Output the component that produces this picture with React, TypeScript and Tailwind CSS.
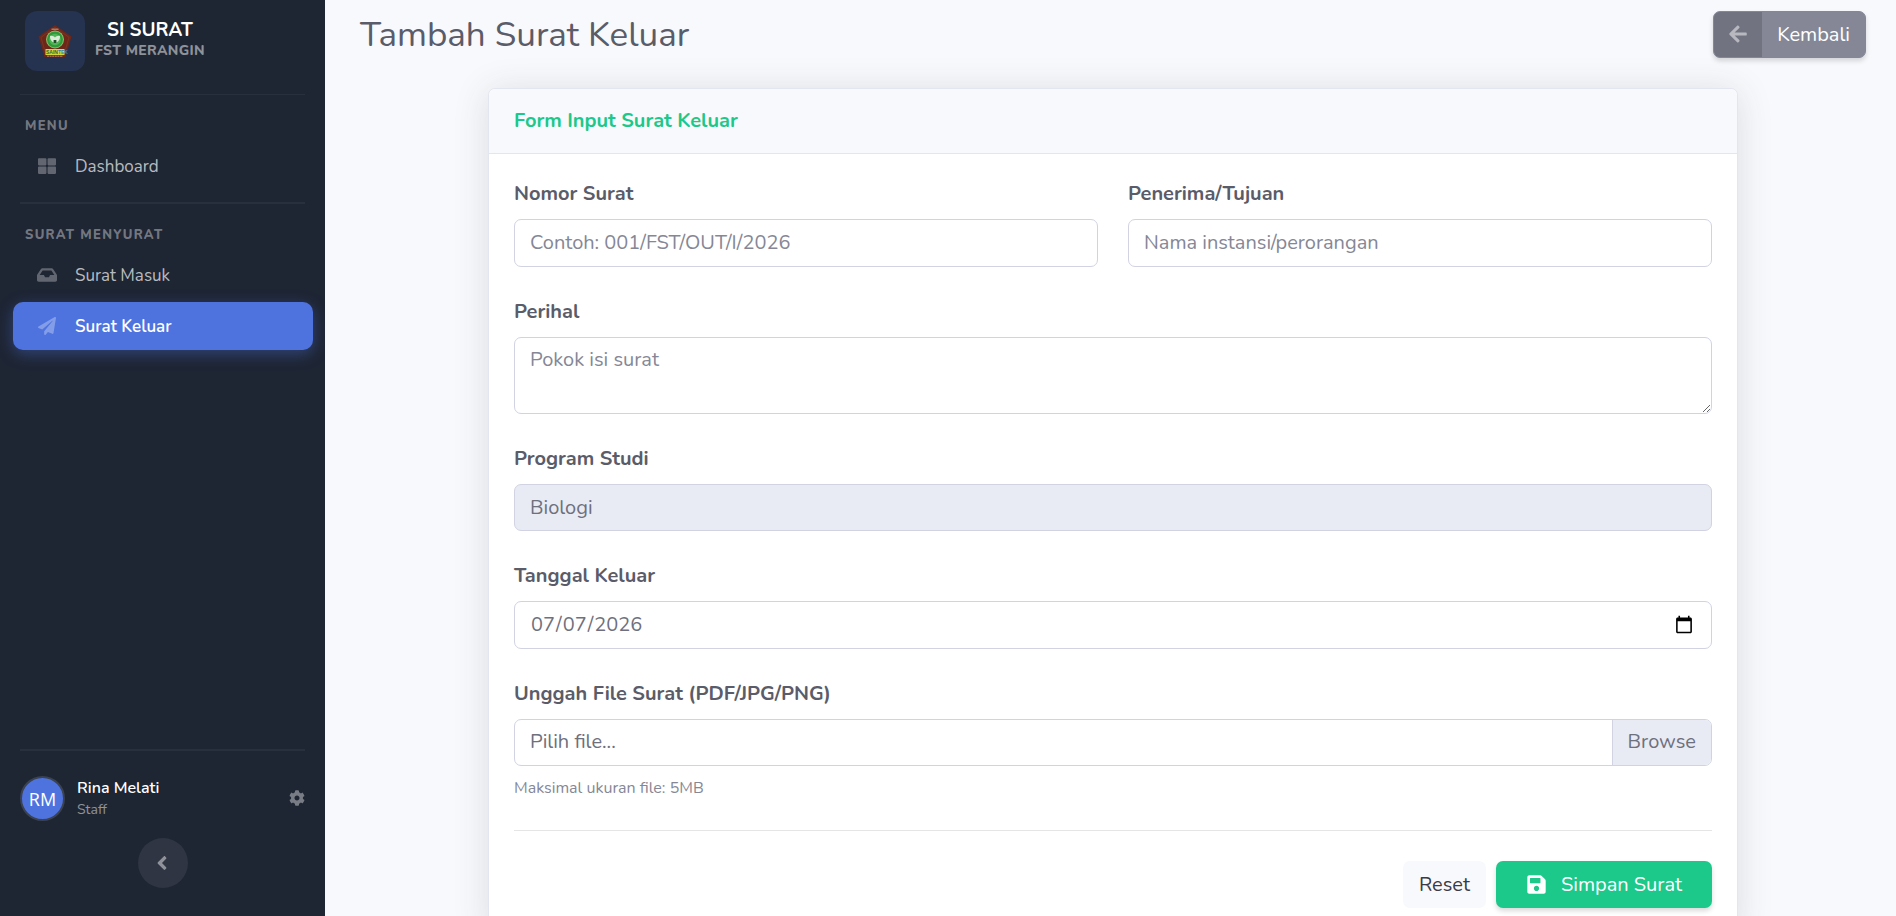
import type { ReactNode } from "react";
import {
  FaAngleLeft,
  FaArrowLeft,
  FaCog,
  FaInbox,
  FaPaperPlane,
  FaSave,
  FaThLarge,
} from "react-icons/fa";

const control =
  "block w-full rounded-[7px] border border-[#d1d3e2] px-[15px] text-xl leading-[30px] text-[#6e707e] placeholder:text-[#858796] outline-none";

function Emblem() {
  return (
    <svg viewBox="0 0 34 34" className="h-[34px] w-[34px]" aria-hidden="true">
      <path d="M17 1 33.500 12.500 27.500 33H6.500L.5 12.500Z" fill="#6e2618" />
      <path d="M17 3.500 31 13.300 26 31H8L3 13.300Z" fill="none" stroke="#80402c" strokeWidth=".6" />
      <path d="M13.500 5.200h7" stroke="#c9a08c" strokeWidth="1" />
      <circle cx="17" cy="15.500" r="9" fill="#8fc06a" />
      <circle cx="17" cy="15.500" r="8" fill="#2f9a3a" />
      <circle cx="17" cy="15.500" r="5.800" fill="#4fb455" />
      <path d="M12 12c2-.6 4 .2 5 1.600 1-1.400 3-2.200 5-1.600.3 3-1.500 5.600-3.500 6.400h-3C13.500 17.600 11.700 15 12 12Z" fill="#dcebd8" />
      <path d="M15.600 16h2.800v3h-2.800z" fill="#1f4c2a" />
      <path d="M7.500 25h19v6h-19z" fill="#d4d838" />
      <text x="8" y="30" fontSize="5" fontWeight="700" fill="#2d6b30" fontFamily="Liberation Sans, sans-serif">
        SAIN<tspan fill="#2b86b8">TEK</tspan>
      </text>
      <path d="M9 32.200h16" stroke="#cf9a86" strokeWidth=".8" strokeDasharray="2 .6" />
    </svg>
  );
}

function NavItem({ icon, label, active = false }: { icon: ReactNode; label: string; active?: boolean }) {
  return (
    <a
      href="#"
      aria-current={active ? "page" : undefined}
      className={
        active
          ? "mr-3 ml-[13px] flex h-12 items-center gap-[18px] rounded-[10px] bg-[#4e73df] pl-6 text-[17px] leading-6 font-semibold text-white shadow-[0_4px_15px_rgba(78,115,223,0.4)]"
          : "mr-3 ml-[13px] flex h-12 items-center gap-[18px] rounded-[10px] pl-6 text-[17px] leading-6 text-white/70"
      }
    >
      <span className="flex w-5 justify-center text-white/30">{icon}</span>
      <span className="pt-0.5">{label}</span>
    </a>
  );
}

function NavHeading({ children }: { children: ReactNode }) {
  return (
    <h2 className="px-[25px] text-[13px] leading-5 font-extrabold tracking-widest text-white/40 uppercase">
      {children}
    </h2>
  );
}

function Sidebar() {
  return (
    <aside className="flex h-full w-[325px] shrink-0 flex-col bg-[#1e2533]">
      {/* Brand */}
      <a href="#" className="flex items-center gap-[10px] px-[25px] pt-[11px]">
        <span className="flex h-[60px] w-[60px] items-center justify-center rounded-xl bg-[#253250]">
          <Emblem />
        </span>
        <span className="text-center">
          <span className="block text-[19px] leading-5 font-bold text-white">SI SURAT</span>
          <span className="block text-sm leading-[22px] font-extrabold tracking-wide text-white/50">FST MERANGIN</span>
        </span>
      </a>
      <hr className="mx-5 mt-[23px] border-white/5" />

      <nav className="flex flex-col">
        <div className="mt-[21px]">
          <NavHeading>Menu</NavHeading>
        </div>
        <div className="mt-1.5">
          <NavItem icon={<FaThLarge size={18} />} label="Dashboard" />
        </div>
        <hr className="mx-5 mt-3 border-t-2 border-white/5" />
        <div className="mt-[21px]">
          <NavHeading>Surat Menyurat</NavHeading>
        </div>
        <div className="mt-1.5 flex flex-col gap-[3px]">
          <NavItem icon={<FaInbox size={20} />} label="Surat Masuk" />
          <NavItem icon={<FaPaperPlane size={18} />} label="Surat Keluar" active />
        </div>
      </nav>

      {/* Signed-in user */}
      <div className="mt-auto pb-7">
        <hr className="mx-5 border-t-2 border-white/5" />
        <div className="mx-5 mt-[25px] flex items-center">
          <span className="flex h-[45px] w-[45px] items-center justify-center rounded-full border-2 border-[#3b4250] bg-[#4e73df] font-['Open_Sans',sans-serif] text-lg text-white">
            RM
          </span>
          <div className="ml-3 grow pb-px">
            <p className="text-base leading-6 font-semibold text-white">Rina Melati</p>
            <p className="text-sm leading-5 text-white/50">Staff</p>
          </div>
          <button type="button" aria-label="Pengaturan" className="pb-0.5 text-white/40">
            <FaCog size={16} />
          </button>
        </div>
        <button
          type="button"
          aria-label="Tutup menu"
          className="mx-auto mt-[17px] flex h-[50px] w-[50px] items-center justify-center rounded-full bg-[#2f3543] pr-0.5 text-[#8f929a]"
        >
          <FaAngleLeft size={22} />
        </button>
      </div>
    </aside>
  );
}

function Field({ id, label, children }: { id: string; label: string; children: ReactNode }) {
  return (
    <div>
      <label htmlFor={id} className="mb-[10px] block text-xl leading-[30px] font-bold text-[#5a5c69]">
        {label}
      </label>
      {children}
    </div>
  );
}

function LetterForm() {
  return (
    <form className="flex flex-col gap-[30px] p-[25px]">
      <div className="grid grid-cols-2 gap-[30px]">
        <Field id="nomor" label="Nomor Surat">
          <input id="nomor" type="text" placeholder="Contoh: 001/FST/OUT/I/2026" className={`${control} h-12 bg-white pb-0.5`} />
        </Field>
        <Field id="penerima" label="Penerima/Tujuan">
          <input id="penerima" type="text" placeholder="Nama instansi/perorangan" className={`${control} h-12 bg-white pb-0.5`} />
        </Field>
      </div>

      <Field id="perihal" label="Perihal">
        <textarea id="perihal" placeholder="Pokok isi surat" className={`${control} h-[77px] resize-y bg-white py-[7px]`} />
      </Field>

      <Field id="prodi" label="Program Studi">
        <input id="prodi" type="text" readOnly value="Biologi" className={`${control} h-[47px] bg-[#e8ebf3]`} />
      </Field>

      <Field id="tanggal" label="Tanggal Keluar">
        <input id="tanggal" type="date" defaultValue="2026-07-07" className={`${control} h-12 bg-white`} />
      </Field>

      <Field id="berkas" label="Unggah File Surat (PDF/JPG/PNG)">
        <div className="relative flex h-[47px] overflow-hidden rounded-[7px] border border-[#d1d3e2] text-xl text-[#6e707e]">
          <span className="flex grow items-center px-[15px] pb-0.5">Pilih file...</span>
          <span className="flex items-center border-l border-[#d1d3e2] bg-[#e8ebf3] px-[15px] pb-0.5">Browse</span>
          <input id="berkas" type="file" accept=".pdf,.jpg,.png" className="absolute inset-0 cursor-pointer opacity-0" />
        </div>
        <p className="mt-[10px] text-base leading-6 text-[#858796]">Maksimal ukuran file: 5MB</p>
      </Field>

      <div className="flex justify-end gap-[10px] border-t border-black/10 pt-[30px]">
        <button type="reset" className="h-[47px] rounded-[7px] bg-[#f8f9fc] px-4 text-xl text-[#3a3b45]">
          Reset
        </button>
        <button
          type="submit"
          className="flex h-[47px] items-center gap-[14px] rounded-[7px] bg-[#1cc88a] px-[30px] text-xl text-white shadow-[0_3px_5px_rgba(0,0,0,0.15)]"
        >
          <FaSave size={21} />
          Simpan Surat
        </button>
      </div>
    </form>
  );
}

export default function App() {
  return (
    <div className="flex h-screen overflow-hidden bg-[#f8f9fc] font-['Nunito','Lato',sans-serif]">
      <Sidebar />

      <main className="grow overflow-y-auto pr-[30px] pl-[35px] [scrollbar-width:none]">
        <header className="flex items-center justify-between pt-[11px]">
          <h1 className="text-[35px] leading-[42px] text-[#5a5c69]">Tambah Surat Keluar</h1>
          <a
            href="#"
            className="flex h-[47px] rounded-[7px] border border-[#858796] bg-[#858796] text-xl text-white shadow-[0_3px_5px_rgba(0,0,0,0.15)]"
          >
            <span className="flex items-center rounded-l-md bg-[#717380] px-[14px] pb-0.5 text-white/50">
              <FaArrowLeft size={20} />
            </span>
            <span className="flex items-center px-[15px]">Kembali</span>
          </a>
        </header>

        <section className="mx-auto mt-[30px] mb-[30px] max-w-[1250px] rounded-[7px] border border-[#e3e6f0] bg-white shadow-[0_3px_35px_rgba(58,59,69,0.15)]">
          <h2 className="rounded-t-[7px] border-b border-[#e3e6f0] bg-[#f8f9fc] px-[25px] py-5 text-xl leading-6 font-bold text-[#1cc88a]">
            Form Input Surat Keluar
          </h2>
          <LetterForm />
        </section>
      </main>
    </div>
  );
}
